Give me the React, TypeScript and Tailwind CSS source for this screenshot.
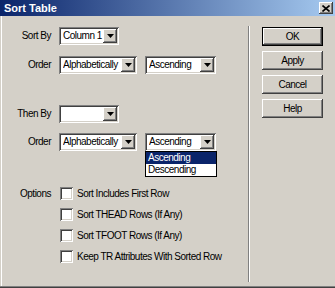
import type { ReactNode } from "react";

const raised =
  "shadow-[inset_-1px_-1px_#404040,inset_1px_1px_#ffffff,inset_-2px_-2px_#808080,inset_2px_2px_#d4d0c8]";
const sunken =
  "shadow-[inset_1px_1px_#808080,inset_-1px_-1px_#ffffff,inset_2px_2px_#404040,inset_-2px_-2px_#d4d0c8]";

function Arrow() {
  return (
    <div className={`shrink-0 w-[14px] h-[14px] bg-[#d4d0c8] flex items-center justify-center ${raised}`}>
      <svg width="7" height="4" viewBox="0 0 7 4">
        <path d="M0 0h7L3.5 4z" fill="#000" />
      </svg>
    </div>
  );
}

function Select({ value, width, children }: { value: string; width: string; children?: ReactNode }) {
  return (
    <div className={`relative h-[18px] ${width}`}>
      <div className={`h-full w-full bg-white flex items-center pl-[4px] pr-[2px] ${sunken}`}>
        <span className="flex-1 whitespace-nowrap overflow-hidden">{value}</span>
        <Arrow />
      </div>
      {children}
    </div>
  );
}

function Row({ label, children, className = "" }: { label: string; children: ReactNode; className?: string }) {
  return (
    <div className={`flex items-center ${className}`}>
      <span className="w-[51px] text-right whitespace-nowrap">{label}</span>
      <div className="ml-[8px] flex items-center gap-[8px]">{children}</div>
    </div>
  );
}

function Check({ label, first }: { label: string; first?: boolean }) {
  return (
    <div className="flex items-center h-[21px]">
      <span className="w-[51px] text-right">{first ? "Options" : ""}</span>
      <div className={`shrink-0 ml-[9px] w-[13px] h-[13px] bg-white ${sunken}`} />
      <span className="ml-[4px] whitespace-nowrap">{label}</span>
    </div>
  );
}

function Button({ label, primary }: { label: string; primary?: boolean }) {
  return (
    <div
      className={`w-[61px] h-[19px] bg-[#d4d0c8] flex items-center justify-center ${
        primary ? "border border-black" : ""
      } ${raised}`}
    >
      {label}
    </div>
  );
}

export default function App() {
  return (
    <div
      className="w-[335px] h-[288px] bg-[#d4d0c8] flex flex-col overflow-hidden text-[10px] tracking-[-0.5px] text-black leading-none shadow-[inset_0_-1px_#404040,inset_0_-2px_#808080,inset_1px_0_#d4d0c8,inset_2px_0_#ffffff]"
      style={{ fontFamily: "'Liberation Sans', Arial, sans-serif" }}
    >
      <div className="h-[16px] shrink-0 flex items-center justify-between pl-[4px] pr-[2px] bg-[linear-gradient(to_right,#0a246a,#a6caf0)]">
        <span className="text-white font-bold text-[11px] tracking-normal">Sort Table</span>
        <div className={`w-[14px] h-[12px] bg-[#d4d0c8] flex items-center justify-center ${raised}`}>
          <svg width="8" height="7" viewBox="0 0 8 7">
            <path d="M0.5 0.5L7.5 6.5M7.5 0.5L0.5 6.5" stroke="#000" strokeWidth="1.6" />
          </svg>
        </div>
      </div>

      <div className="flex-1 flex">
        <div className="w-[248px] shrink-0 flex flex-col">
          <Row label="Sort By" className="mt-[11px]">
            <Select value="Column 1" width="w-[60px]" />
          </Row>
          <Row label="Order" className="mt-[11px]">
            <Select value="Alphabetically" width="w-[78px]" />
            <Select value="Ascending" width="w-[71px]" />
          </Row>
          <Row label="Then By" className="mt-[31px]">
            <Select value="" width="w-[60px]" />
          </Row>
          <Row label="Order" className="mt-[10px]">
            <Select value="Alphabetically" width="w-[78px]" />
            <Select value="Ascending" width="w-[71px]">
              <div className="absolute top-full left-0 w-[72px] bg-white border border-black">
                <div className="h-[12px] flex items-center pl-[2px] bg-[#0a246a] text-white">Ascending</div>
                <div className="h-[12px] flex items-center pl-[2px]">Descending</div>
              </div>
            </Select>
          </Row>
          <div className="mt-[32px] flex flex-col">
            <Check first label="Sort Includes First Row" />
            <Check label="Sort THEAD Rows (If Any)" />
            <Check label="Sort TFOOT Rows (If Any)" />
            <Check label="Keep TR Attributes With Sorted Row" />
          </div>
        </div>

        <div className="w-[2px] mt-[10px] mb-[6px] border-l border-l-[#808080] border-r border-r-white" />

        <div className="ml-[12px] pt-[11px] flex flex-col gap-[5px]">
          <Button label="OK" primary />
          <Button label="Apply" />
          <Button label="Cancel" />
          <Button label="Help" />
        </div>
      </div>
    </div>
  );
}
